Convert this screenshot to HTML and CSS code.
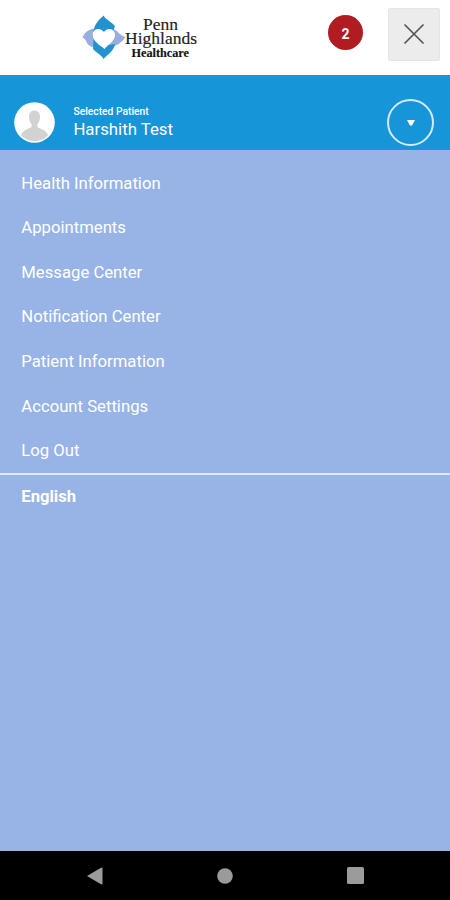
FILE: index.html
```html
<!DOCTYPE html>
<html lang="en">
<head>
<meta charset="utf-8">
<title>Penn Highlands Healthcare</title>
<link rel="stylesheet" href="styles.css">
</head>
<body>
<div class="app">
  <header class="header">
    <svg class="logo" width="120" height="50" viewBox="82 12 120 50">
      <path fill="#97aee0" d="M82.500 37.500C85 31 91 28 98 28.500L100 46C93 48.500 88 46 86.500 42C85.500 39.500 84 38 82.500 37.500Z"/>
      <path fill="#97aee0" d="M109 28C117 28 118 35 125.500 37C121 44 114 47.500 105 47.500Z"/>
      <path fill="#2492cf" d="M93.500 32C94 24 99 20 103.500 15.500C106 20 111 21.500 115 26L112 34L97 35Z"/>
      <path fill="#2492cf" d="M93.500 39L104 46L115 44C114 51 108 54 103.500 59C101 54 96 53 93 49Z"/>
      <path fill="#fff" d="M104.500 49C99 44.500 92.700 41 92.700 35C92.700 28.500 100 27 104 32C107 27 115 28.500 115 35C115 41 108.500 44 104.500 49Z"/>
      <g class="logo-text">
        <text x="143" y="30" textLength="35" lengthAdjust="spacingAndGlyphs">Penn</text>
        <text x="125" y="44" textLength="72" lengthAdjust="spacingAndGlyphs">Highlands</text>
        <text class="logo-small" x="131.500" y="56.500" textLength="57.500" lengthAdjust="spacingAndGlyphs">Healthcare</text>
      </g>
    </svg>
    <span class="badge">2</span>
    <button class="close" aria-label="Close">
      <svg width="22" height="22" viewBox="0 0 22 22"><path d="M1.500 1.500L20.500 20.500M20.500 1.500L1.500 20.500" stroke="#555" stroke-width="1.700"/></svg>
    </button>
  </header>
  <section class="patient">
    <svg class="avatar" width="41" height="41" viewBox="0 0 41 41">
      <defs><clipPath id="disc"><circle cx="20.500" cy="20.500" r="18.800"/></clipPath></defs>
      <circle cx="20.500" cy="20.500" r="20.300" fill="#fff"/>
      <path clip-path="url(#disc)" fill="#d2d2d2" d="M20.500 8.500C24 8.500 26 11 26 14.500C26 18 25 20.500 23.500 22V25C26 27 32 27.500 34 33V41H7V33C9 27.500 15 27 17.500 25V22C16 20.500 15 18 15 14.500C15 11 17 8.500 20.500 8.500Z"/>
    </svg>
    <div class="who">
      <div class="label">Selected Patient</div>
      <div class="name">Harshith Test</div>
    </div>
    <button class="toggle" aria-label="Choose patient">
      <svg width="8" height="6" viewBox="0 0 8 6"><path d="M0 0H8L5 5.500H3Z" fill="#fff"/></svg>
    </button>
  </section>
  <nav class="menu">
    <a>Health Information</a>
    <a>Appointments</a>
    <a>Message Center</a>
    <a>Notification Center</a>
    <a>Patient Information</a>
    <a>Account Settings</a>
    <a>Log Out</a>
  </nav>
  <div class="language">English</div>
  <footer class="system">
    <svg width="16" height="18" viewBox="0 0 16 18"><path d="M0 9L14 .8Q15.500 0 15.500 1.500V16.500Q15.500 18 14 17.200Z" fill="#9b9b9b"/></svg>
    <svg width="16" height="16" viewBox="0 0 16 16"><circle cx="8" cy="8" r="7.800" fill="#9b9b9b"/></svg>
    <svg width="17" height="17" viewBox="0 0 17 17"><rect width="17" height="17" rx="1.500" fill="#9b9b9b"/></svg>
  </footer>
</div>
</body>
</html>
```
FILE: styles.css
```css
* { box-sizing: border-box; }
body { margin: 0; font-family: Roboto, sans-serif; color: #fff; }
button { padding: 0; border: 0; background: none; }
svg { display: block; flex: none; }
.app { height: 900px; display: flex; flex-direction: column; background: #98b4e6; }
.header { height: 75px; flex: none; display: flex; align-items: flex-start; background: #fff; padding: 0 10px 0 82px; }
.logo { margin-top: 12px; }
.logo-text { font-family: "Liberation Serif", serif; font-size: 16.500px; fill: #222; stroke: #222; stroke-width: .15px; }
.logo-small { font-size: 11.500px; font-weight: bold; fill: #111; }
.badge { width: 35px; height: 35px; margin: 15px 25px 0 auto; border-radius: 50%; background: #b01c1f; font-size: 14px; font-weight: 700; line-height: 38px; text-align: center; }
.close { width: 52px; height: 53px; margin-top: 7.500px; display: grid; place-items: center; background: #ececec; border: 1px solid #e5e5e5; border-radius: 2px; }
.patient { height: 75px; flex: none; display: flex; align-items: center; padding: 20px 15.600px 0 14.400px; background: #1695d9; }
.who { margin-left: 18px; }
.label { font-size: 10.300px; font-weight: 500; line-height: 12px; }
.name { font-size: 16.800px; line-height: 22px; }
.toggle { width: 47px; height: 47px; margin-left: auto; border: 2px solid #d5eaff; border-radius: 50%; display: grid; place-items: center; }
.menu { flex: none; display: flex; flex-direction: column; padding-top: 10.700px; border-bottom: 2px solid #dce8fb; }
.menu a { height: 44.600px; padding-left: 21.300px; font-size: 16.700px; line-height: 45.600px; }
.language { padding-left: 21.300px; font-size: 16.600px; font-weight: 700; line-height: 43px; }
.system { height: 49px; margin-top: auto; background: #000; display: flex; align-items: center; justify-content: space-between; padding: 0 86.500px; }
```
